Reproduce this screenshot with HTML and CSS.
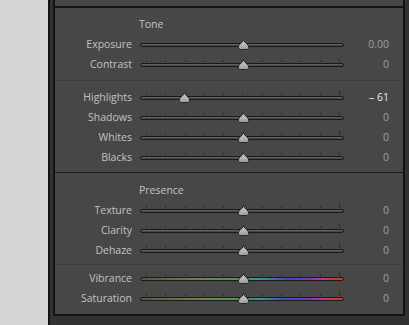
FILE: index.html
```html
<!doctype html>
<html lang="en">
<head>
    <meta charset="UTF-8">
    <title>Basic - Tone</title>
    <link rel="stylesheet" href="styles.css">
</head>
<body>
    <svg class="defs" width="0" height="0">
        <defs>
            <linearGradient id="knob" x1="0" y1="0" x2="0" y2="1">
                <stop offset="0" stop-color="#d2d2d2"/>
                <stop offset="1" stop-color="#9c9c9c"/>
            </linearGradient>
            <symbol id="thumb" viewBox="0 0 11 11">
                <path d="M5.5 0.5C6.2 2.5 7 3.5 9 5C10.5 6 10.5 7.5 10.5 8.5C10.5 10 9.5 10.5 8.5 10.5L2.5 10.5C1.5 10.5 0.5 10 0.5 8.5C0.5 7.5 0.5 6 2 5C4 3.5 4.8 2.5 5.5 0.5Z" fill="url(#knob)" stroke="#252525" stroke-width="1"/>
            </symbol>
        </defs>
    </svg>

    <div class="side"></div>
    <div class="dock">
        <div class="panel">
            <div class="prev"></div>

            <div class="group g-tone">
                <div class="head">Tone</div>
                <div class="row">
                    <span class="label">Exposure</span>
                    <div class="slider bare"><div class="track"></div><svg class="thumb" style="left:50.5%"><use href="#thumb"/></svg></div>
                    <span class="value">0.00</span>
                </div>
                <div class="row">
                    <span class="label">Contrast</span>
                    <div class="slider"><div class="track"></div><svg class="thumb" style="left:50.5%"><use href="#thumb"/></svg></div>
                    <span class="value">0</span>
                </div>
            </div>

            <div class="group g-light">
                <div class="row">
                    <span class="label">Highlights</span>
                    <div class="slider"><div class="track"></div><svg class="thumb" style="left:21.8%"><use href="#thumb"/></svg></div>
                    <span class="value set">&ndash; 61</span>
                </div>
                <div class="row">
                    <span class="label">Shadows</span>
                    <div class="slider"><div class="track"></div><svg class="thumb" style="left:50.5%"><use href="#thumb"/></svg></div>
                    <span class="value">0</span>
                </div>
                <div class="row">
                    <span class="label">Whites</span>
                    <div class="slider"><div class="track"></div><svg class="thumb" style="left:50.5%"><use href="#thumb"/></svg></div>
                    <span class="value">0</span>
                </div>
                <div class="row">
                    <span class="label">Blacks</span>
                    <div class="slider"><div class="track"></div><svg class="thumb" style="left:50.5%"><use href="#thumb"/></svg></div>
                    <span class="value">0</span>
                </div>
            </div>

            <div class="group g-presence">
                <div class="head">Presence</div>
                <div class="row">
                    <span class="label">Texture</span>
                    <div class="slider"><div class="track"></div><svg class="thumb" style="left:50.5%"><use href="#thumb"/></svg></div>
                    <span class="value">0</span>
                </div>
                <div class="row">
                    <span class="label">Clarity</span>
                    <div class="slider"><div class="track"></div><svg class="thumb" style="left:50.5%"><use href="#thumb"/></svg></div>
                    <span class="value">0</span>
                </div>
                <div class="row">
                    <span class="label">Dehaze</span>
                    <div class="slider"><div class="track"></div><svg class="thumb" style="left:50.5%"><use href="#thumb"/></svg></div>
                    <span class="value">0</span>
                </div>
            </div>

            <div class="group g-color">
                <div class="row">
                    <span class="label">Vibrance</span>
                    <div class="slider"><div class="track hue"></div><svg class="thumb" style="left:50.5%"><use href="#thumb"/></svg></div>
                    <span class="value">0</span>
                </div>
                <div class="row">
                    <span class="label">Saturation</span>
                    <div class="slider"><div class="track hue"></div><svg class="thumb" style="left:50.5%"><use href="#thumb"/></svg></div>
                    <span class="value">0</span>
                </div>
            </div>
        </div>
    </div>
</body>
</html>
```

FILE: styles.css
```css
*{
    margin: 0;
    padding: 0;
    box-sizing: border-box;
}
html,body{
    height: 100%;
}
body{
    display: flex;
    background: #d6d6d6;
    font-family: "Open Sans", "Noto Sans", sans-serif;
    font-size: 10.5px;
    overflow: hidden;
}
.defs{
    position: absolute;
}
.side{
    width: 48px;
    flex: none;
}
.dock{
    flex: 1;
    background: #323232;
    border-left: 2px solid #121212;
    padding: 0 4px 0 3px;
}
.panel{
    background: #474747;
    border: 2px solid #141414;
    border-top: none;
}
.prev{
    height: 8px;
    border-bottom: 2px solid #141414;
}
.group{
    border-bottom: 1px solid #3d3d3d;
}
.g-tone{
    padding: 6px 0 6px;
}
.g-light{
    padding: 6px 0 5px;
    border-bottom-color: #1a1a1a;
}
.g-presence{
    padding: 7px 0 4px;
}
.g-color{
    padding: 3px 0 6px;
    border-bottom: none;
}
.head{
    height: 20px;
    line-height: 20px;
    padding-left: 84px;
    color: #c3c3c3;
}
.row{
    display: grid;
    grid-template-columns: 85px 204px 45px;
    height: 20px;
    line-height: 20px;
}
.label{
    text-align: right;
    padding-right: 8px;
    color: #c2c2c2;
}
.value{
    text-align: right;
    color: #9ba1a6;
}
.value.set{
    color: #ececec;
}
.slider{
    position: relative;
    display: flex;
    align-items: center;
    padding-top: 1px;
}
/* scale ticks */
.slider::before{
    content: "";
    position: absolute;
    left: 6px;
    top: 6px;
    width: 194px;
    height: 2px;
    background: repeating-linear-gradient(to right, #2c2c2c 0 1px, transparent 1px 19.3px);
}
.slider::after{
    content: "";
    position: absolute;
    left: 199px;
    top: 4px;
    width: 1px;
    height: 4px;
    background: #2c2c2c;
}
.slider.bare::before,
.slider.bare::after{
    display: none;
}
.track{
    flex: 1;
    height: 4px;
    border-radius: 3px;
    border: 1px solid #1a1a1a;
    background: linear-gradient(#6a6a6a, #3c3c3c);
}
.track.hue{
    background: linear-gradient(to right, #55574a 0%, #74814a 28%, #539552 48%, #3a9292 60%, #3a4fbb 72%, #7238b8 82%, #b8399c 90%, #cc3838 97%);
}
.thumb{
    position: absolute;
    top: 5px;
    width: 11px;
    height: 11px;
    margin-left: -5.5px;
}
```
